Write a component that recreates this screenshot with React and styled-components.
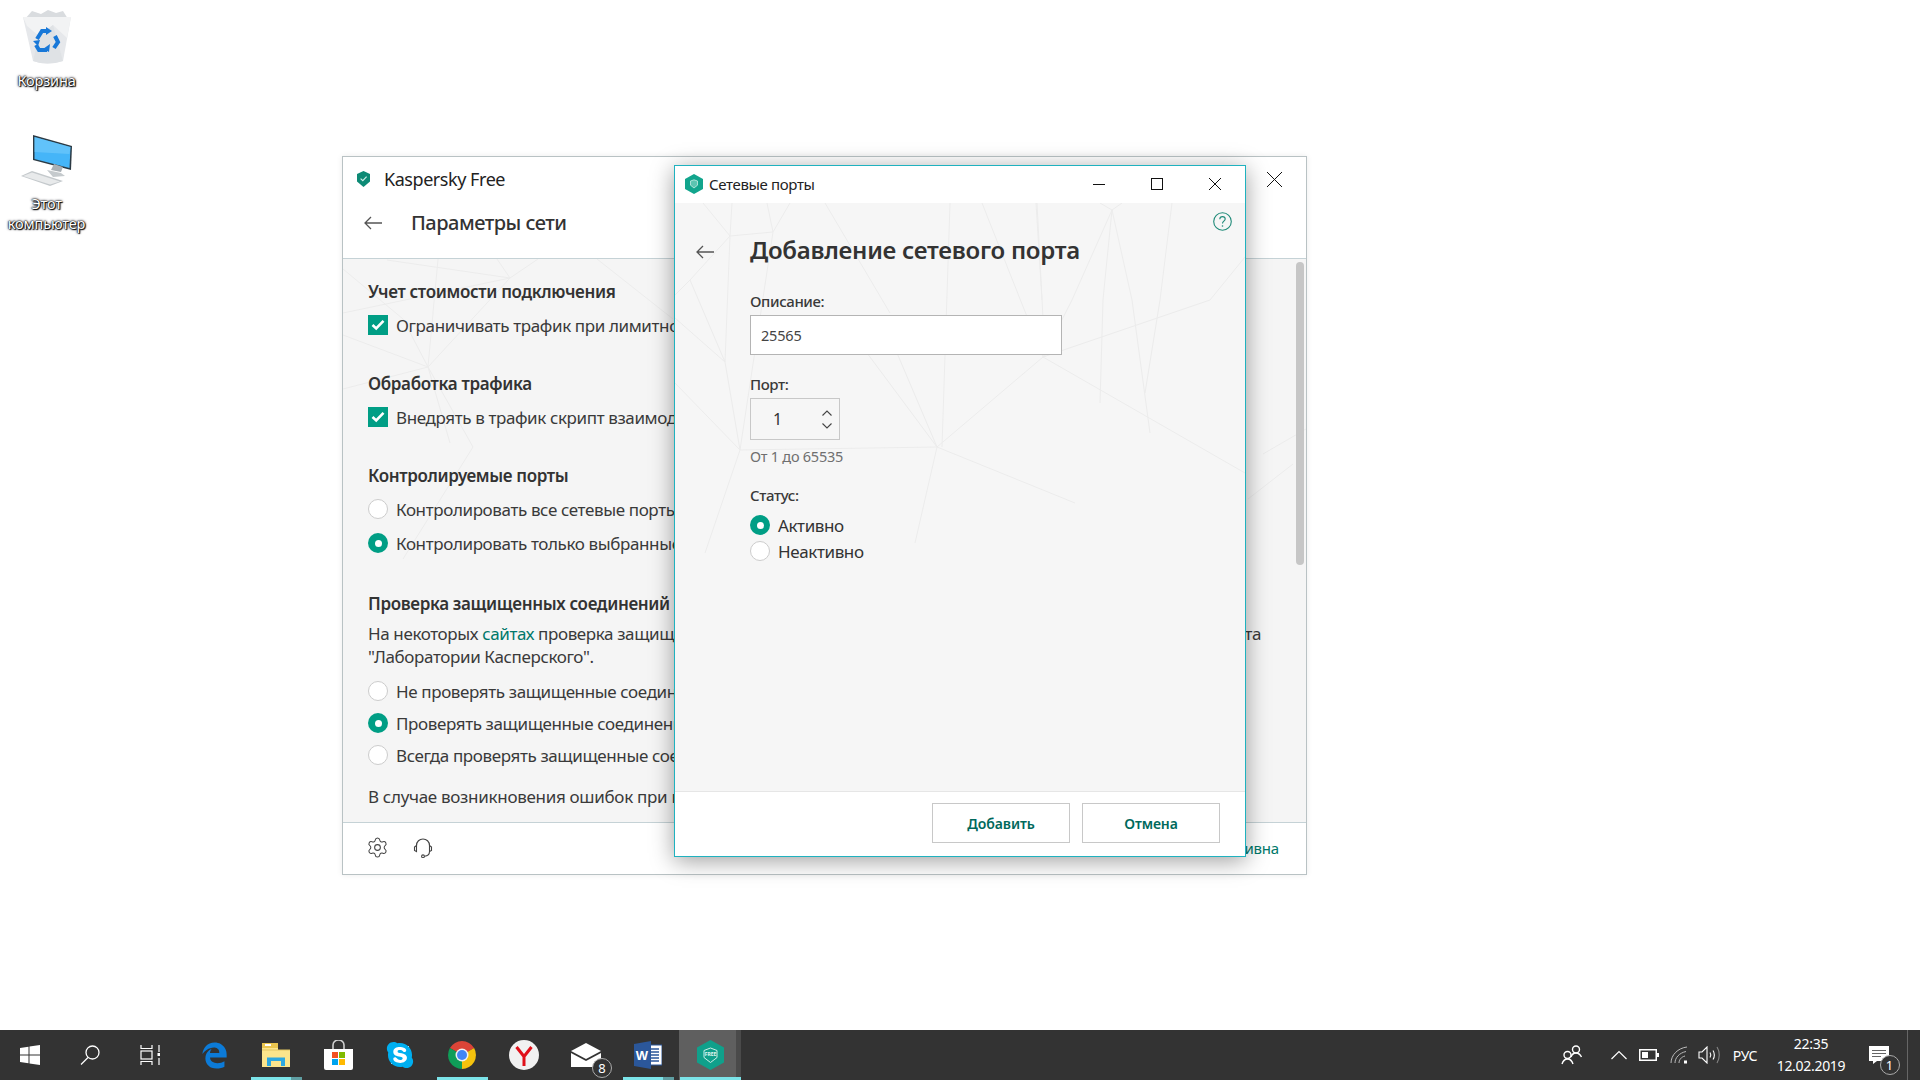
import React from "react";
import styled, { createGlobalStyle } from "styled-components";
import { Settings } from "lucide-react";
import { FaSkype } from "react-icons/fa";
import { FaEdgeLegacy } from "react-icons/fa6";

const FONT = `"Noto Sans", "Open Sans", "Liberation Sans", sans-serif`;

const Global = createGlobalStyle`
  html, body { margin: 0; padding: 0; background: #fff; }
  body { font-family: ${FONT}; overflow: hidden; }
  * { box-sizing: border-box; }
`;

const Screen = styled.div`
  width: 1920px; height: 1080px; display: flex; flex-direction: column; overflow: hidden;
`;
const DesktopArea = styled.div`
  flex: 1; position: relative; background: #fff;
`;
const DesktopIcon = styled.div`
  position: absolute; left: 0; top: ${p => p.$top}px; width: 93px;
  display: flex; flex-direction: column; align-items: center;
`;
const DesktopLabel = styled.div`
  color: #fff; font-size: 14.5px; line-height: 20px; letter-spacing: -0.15px; text-align: center;
  margin-top: ${p => p.$top || 0}px;
  text-shadow: 0 0 2px #000, 1px 1px 1px #000, 0 0 3px #223, 0 0 1px #000;
`;

/* Main window */
const MainWindow = styled.div`
  position: absolute; left: 342px; top: 156px; width: 965px; height: 719px;
  background: #fff; border: 1px solid #b9c2c4; display: flex; flex-direction: column;
  box-shadow: 0 0 6px rgba(0,0,0,.08);
`;
const MainHeader = styled.div`
  height: 102px; flex: none; border-bottom: 1px solid #c5d2d6; display: flex; flex-direction: column;
`;
const MainTitleBar = styled.div`
  height: 44px; display: flex; align-items: center; padding: 0 24px 0 14px;
`;
const MainTitle = styled.div`
  font-size: 18px; color: #222; margin-left: 14px; letter-spacing: -0.45px; flex: 1;
`;
const SubHeader = styled.div`
  height: 43px; display: flex; align-items: center; padding-left: 21px;
`;
const SubTitle = styled.div`
  font-size: 20px; font-weight: 500; color: #333; margin-left: 29px; letter-spacing: -0.5px;
`;
const MainBody = styled.div`
  flex: 1; position: relative; background: #f5f5f5; overflow: hidden; padding: 21px 0 0 25px;
`;
const Pattern = styled.svg`
  position: absolute; left: 0; top: 0; pointer-events: none;
  line { stroke: #ececec; stroke-width: 1; }
`;
const Layer = styled.div`
  position: relative;
`;
const Heading = styled.div`
  font-size: 17px; font-weight: 600; line-height: 24px; color: #333; margin-top: ${p => p.$top || 0}px;
  letter-spacing: -0.35px; white-space: nowrap;
`;
const OptionRow = styled.div`
  display: flex; align-items: center; gap: 8px; height: 24px; margin-top: ${p => p.$top || 0}px;
  font-size: 17px; color: #3a3a3a; letter-spacing: -0.38px; white-space: nowrap;
`;
const CheckBox = styled.span`
  width: 20px; height: 20px; background: #009e85; flex: none; display: flex; align-items: center; justify-content: center;
`;
const Radio = styled.span`
  width: 20px; height: 20px; border-radius: 50%; flex: none; display: flex; align-items: center; justify-content: center;
  background: ${p => (p.$on ? "#009e85" : "#fff")};
  border: ${p => (p.$on ? "none" : "1.5px solid #cccccc")};
  &::after { content: ""; width: 7px; height: 7px; border-radius: 50%; background: ${p => (p.$on ? "#fff" : "transparent")}; }
`;
const Paragraph = styled.div`
  font-size: 17px; line-height: 23px; color: #3a3a3a; margin-top: ${p => p.$top || 0}px; width: 884px; letter-spacing: -0.38px;
`;
const JustLine = styled.span`
  display: block; text-align-last: justify; white-space: nowrap;
`;
const Link = styled.span`
  color: #00786a;
`;
const Plain = styled.div`
  font-size: 17px; line-height: 24px; color: #3a3a3a; margin-top: ${p => p.$top || 0}px; letter-spacing: -0.3px; white-space: nowrap;
`;
const ScrollThumb = styled.div`
  position: absolute; right: 2px; top: 3px; width: 8px; height: 303px; border-radius: 4px; background: #c6c6c6;
`;
const MainFooter = styled.div`
  height: 52px; flex: none; border-top: 1px solid #c5d2d6; display: flex; align-items: center; gap: 24px; padding: 0 27px 2px 23px;
`;
const LicenseText = styled.div`
  margin-left: auto; font-size: 15px; color: #00786a; letter-spacing: -0.2px;
`;

/* Dialog */
const Dialog = styled.div`
  position: absolute; left: 674px; top: 165px; width: 572px; height: 692px;
  background: #fff; border: 1px solid #1fb2bf; display: flex; flex-direction: column;
  box-shadow: 0 4px 22px rgba(0,0,0,.38);
`;
const DialogBar = styled.div`
  height: 37px; flex: none; display: flex; align-items: center; padding: 0 1px 2px 10px;
`;
const DialogBarTitle = styled.div`
  flex: 1; margin-left: 6px; font-size: 15px; color: #222; letter-spacing: -0.35px;
`;
const WinButton = styled.div`
  width: 58px; height: 35px; display: flex; align-items: center; justify-content: center;
`;
const DialogBody = styled.div`
  flex: 1; position: relative; background: #f6f6f6; display: grid; grid-template-columns: 75px 1fr; overflow: hidden;
`;
const BackColumn = styled.div`
  position: relative; padding: 39px 0 0 21px;
`;
const FormColumn = styled.div`
  position: relative; padding-top: 31px; display: flex; flex-direction: column; align-items: flex-start;
`;
const DialogTitle = styled.div`
  font-size: 24px; font-weight: 600; line-height: 32px; color: #333; letter-spacing: -0.26px; white-space: nowrap;
`;
const FieldLabel = styled.div`
  font-size: 15px; font-weight: 500; line-height: 20px; color: #3a3a3a; margin-top: ${p => p.$top}px; letter-spacing: -0.4px;
`;
const TextField = styled.div`
  width: 312px; height: 40px; margin-top: 4px; background: #fff; border: 1px solid #b4b4b4;
  display: flex; align-items: center; padding-left: 10px; font-size: 14.5px; color: #444; letter-spacing: -0.2px;
`;
const Spinner = styled.div`
  width: 90px; height: 42px; margin-top: 4px; border: 1px solid #c8c8c8; display: flex; align-items: center;
  justify-content: space-between; padding: 0 7px 0 22px; font-size: 16px; color: #333;
`;
const SpinArrows = styled.div`
  display: flex; flex-direction: column; gap: 7px;
`;
const Hint = styled.div`
  font-size: 14.5px; line-height: 20px; color: #6f6f6f; margin-top: 6px; letter-spacing: -0.25px;
`;
const StatusRow = styled(OptionRow)`
  color: #333;
`;
const HelpIcon = styled.svg`
  position: absolute; right: 13px; top: 9px;
`;
const DialogFooter = styled.div`
  height: 65px; flex: none; border-top: 1px solid #e6e6e6; display: flex; align-items: center; justify-content: flex-end;
  gap: 12px; padding: 0 25px 2px 0;
`;
const ActionButton = styled.div`
  width: 138px; height: 40px; border: 1px solid #c8c8c8; background: #fff; display: flex; align-items: center; justify-content: center;
  font-size: 14px; font-weight: 600; color: #00695c; letter-spacing: -0.1px;
`;

/* Taskbar */
const Taskbar = styled.div`
  height: 50px; flex: none; background: #333; display: flex; align-items: stretch;
`;
const SystemButton = styled.div`
  width: 60px; display: flex; align-items: center; justify-content: center;
`;
const Gap = styled.div`
  width: ${p => p.$w}px; flex: none;
`;
const TaskButton = styled.div`
  width: 62px; position: relative; display: flex; align-items: center; justify-content: center;
  background: ${p => (p.$active ? "linear-gradient(90deg,#5f5f5f 0 57px,#4a4a4a 57px)" : "transparent")};
  &::after {
    content: ""; position: absolute; bottom: 0; height: 3px;
    left: ${p => (p.$active ? 1 : 6)}px; right: ${p => (p.$active ? 0 : 5)}px;
    display: ${p => (p.$run ? "block" : "none")};
    background: ${p => (p.$stack ? "linear-gradient(90deg,#7be3e8 0 40px,#5f9ea2 40px)" : "#7be3e8")};
  }
`;
const BadgeWrap = styled.div`
  position: relative; display: flex;
`;
const Badge = styled.div`
  position: absolute; right: -11px; bottom: -11px; width: 20px; height: 20px; border-radius: 50%;
  background: #333; border: 1px solid #aaa; color: #fff; font-size: 13px; display: flex; align-items: center; justify-content: center;
`;
const Tray = styled.div`
  margin-left: auto; display: flex; align-items: stretch; color: #fff;
`;
const TrayItem = styled.div`
  width: ${p => p.$w}px; display: flex; align-items: center; justify-content: center;
`;
const LangText = styled.div`
  font-size: 14px; color: #fff; letter-spacing: -0.2px;
`;
const Clock = styled.div`
  width: 88px; display: flex; flex-direction: column; align-items: center; justify-content: center; gap: 2px;
  font-size: 14px; line-height: 20px; color: #fff; letter-spacing: -0.3px;
`;
const ShowDesktop = styled.div`
  width: 13px; border-left: 1px solid #666; margin-left: 5px;
`;

/* Drawings */
const lines = pts => pts.map((l, i) => <line key={i} x1={l[0]} y1={l[1]} x2={l[2]} y2={l[3]} />);
const mainLines = [
  [95,0,85,108],[44,1,167,19],[154,0,167,19],[195,0,167,19],[167,19,85,108],[0,54,167,19],[0,76,85,108],
  [0,10,60,60],[85,108,130,188],[85,108,107,184],[254,0,330,60],[60,60,85,108],[0,130,85,108],[130,188,60,300],
  [950,205,905,240],[963,170,920,195]
];
const dialogLines = [
  [55,33,98,29],[28,0,55,33],[57,0,55,33],[92,0,98,29],[115,0,98,29],[98,29,65,247],[55,33,15,77],[55,33,50,159],
  [15,77,50,159],[0,92,15,77],[0,115,50,159],[50,159,65,247],[0,180,65,247],[65,247,30,350],[150,0,215,110],[275,0,267,244],
  [307,0,368,154],[362,0,370,154],[192,150,262,244],[222,150,262,244],[262,244,368,154],[368,154,570,270],[437,7,397,97],
  [437,7,428,97],[437,7,457,97],[497,0,485,97],[361,0,367,97],[570,54,535,97],[425,0,437,7],[447,0,437,7],[397,97,368,154],
  [428,97,425,200],[457,97,475,230],[485,97,470,190],[535,97,368,154],[262,244,240,340],[262,244,400,300],[65,247,262,244]
];

const BackArrow = () => (
  <svg width="18" height="14" viewBox="0 0 18 14" fill="none" stroke="#555" strokeWidth="1.3"><path d="M18 7H1M7 1 1 7l6 6" /></svg>
);
const Cross = ({ s = 12 }) => (
  <svg width={s} height={s} viewBox="0 0 12 12" stroke="#111" strokeWidth={12 / s} fill="none"><path d="M0 0 12 12M12 0 0 12" /></svg>
);
const Check = () => (
  <svg width="14" height="12" viewBox="0 0 14 12" fill="none" stroke="#fff" strokeWidth="2.6"><path d="M1.5 6 5.2 9.5 12.5 1.8" /></svg>
);
const ShieldSmall = () => (
  <svg width="13" height="16" viewBox="0 0 13 16"><path d="M6.5 0 13 3v7.5L6.5 16 0 10.5V3Z" fill="#0d8a75" /><path d="M3.6 7.6 5.8 9.6 9.6 5.6" stroke="#cfeee8" strokeWidth="1.2" fill="none" /></svg>
);
const HexIcon = ({ w, h }) => (
  <svg width={w} height={h} viewBox="0 0 18 20">
    <path d="M9 0 18 5v10l-9 5-9-5V5Z" fill="#12a58d" />
    <path d="M5.5 7 9 5.8 12.5 7v4.2L9 14 5.5 11.2Z" fill="#5cc4b1" stroke="#d9f3ee" strokeWidth="0.7" />
  </svg>
);
const Headset = () => (
  <svg width="20" height="20" viewBox="0 0 20 20" fill="none" stroke="#444" strokeWidth="1.1">
    <path d="M3.5 7.5C3.5 3.5 6.5 1 10 1s6.5 2.500 6.5 6.5" />
    <path d="M3.5 7.5 1.5 9v3.5l2 1Z" /><path d="M16.5 7.5l2 1.5v3.5l-2 1ZM16.5 13.5c0 2.500-2 4.500-5 4.800" />
    <circle cx="10" cy="18.300" r="1.400" />
  </svg>
);
const RecycleBin = () => (
  <svg width="60" height="56" viewBox="0 0 60 56">
    <path d="M8 11 15 3l9 3 7-4 8 3 7-2 5 8-8 4H14Z" fill="#d9dcdf" />
    <path d="M6 9H54L46 53Q30 58 16 53Z" fill="#e6e8eb" />
    <path d="M6 9H54L50 30 36 17 22 28 10 18Z" fill="#f2f3f4" />
    <path d="M16 53 22 28 36 17 46 53Q30 58 16 53Z" fill="#dfe2e5" />
    <g fill="none" stroke="#1878d8" strokeWidth="4">
      <path d="M20 31l5-8h5" /><path d="M38 28l3 6-4 6" /><path d="M30 42h-8l-3-5" />
    </g>
    <path d="M29 19l6 4-6 4ZM33 36l-1 8-6-3ZM16 33l7-1-2 6Z" fill="#1878d8" />
  </svg>
);
const Computer = () => (
  <svg width="60" height="58" viewBox="0 0 60 58">
    <path d="M16 1 55 12 54 36 16 26Z" fill="#2c3a44" />
    <path d="M17.5 3 53.5 13 52.5 34 17.5 25Z" fill="#45b5f8" />
    <path d="M17.5 3 53.5 13 52.5 20 17.5 18Z" fill="#7dd0fb" opacity=".5" />
    <path d="M37 30 46 33 44 38 34 36Z" fill="#a9b0b5" />
    <path d="M30 36 44 39 48 42 36 43Z" fill="#c5cacd" />
    <path d="M4 42 15 37 46 47 33 52Z" fill="#c4c9cc" />
    <path d="M6 42 15 38.5 43 47.5 33 50.5Z" fill="#e8eaeb" />
  </svg>
);
const WinLogo = () => (
  <svg width="20" height="20" viewBox="0 0 20 20" fill="#fff">
    <path d="M0 3 8.5 1.8V9.5H0ZM9.5 1.6 20 0V9.5H9.5ZM0 10.5H8.5V18.2L0 17ZM9.5 10.5H20V20L9.5 18.4Z" />
  </svg>
);
const SearchIcon = () => (
  <svg width="20" height="20" viewBox="0 0 20 20" fill="none" stroke="#fff" strokeWidth="1.3"><circle cx="12.5" cy="7.5" r="6.5" /><path d="M8 12.5 1 19.5" /></svg>
);
const TaskViewIcon = () => (
  <svg width="20" height="20" viewBox="0 0 20 20" fill="none" stroke="#fff" strokeWidth="1.2">
    <path d="M1 0v3.5h11V0M1 20v-3.5h11V20" /><rect x="1" y="6" width="11" height="8" /><path d="M19 0v7M19 13v7" /><rect x="17.5" y="8" width="3" height="3" fill="#fff" stroke="none" />
  </svg>
);
const Explorer = () => (
  <svg width="28" height="24" viewBox="0 0 28 24">
    <path d="M0 1h10l2 2h4V7H28v17H0Z" fill="#fce58c" />
    <path d="M0 0h16v5H0Z" fill="#eac54f" /><rect x="3" y="1" width="6" height="2" fill="#fff" />
    <path d="M5 23v-8.500h18V23h-4v-5H9v5Z" fill="#2ea8e0" />
    <path d="M0 7H28" stroke="#e3c661" />
  </svg>
);
const StoreIcon = () => (
  <svg width="29" height="30" viewBox="0 0 29 30">
    <path d="M9 9V5a5.500 5 0 0 1 11 0v4" fill="none" stroke="#cfcfcf" strokeWidth="1.6" />
    <path d="M0 9H29V28Q29 30 27 30H2Q0 30 0 28Z" fill="#fff" />
    <rect x="8" y="12" width="6" height="6" fill="#f25022" /><rect x="15" y="12" width="6" height="6" fill="#7fba00" />
    <rect x="8" y="19" width="6" height="6" fill="#00a4ef" /><rect x="15" y="19" width="6" height="6" fill="#ffb900" />
  </svg>
);
const SkypeIcon = styled.div`
  position: relative; width: 28px; height: 28px; display: flex; align-items: center; justify-content: center; color: #00aff0;
  &::before { content: ""; position: absolute; inset: 5px; background: #fff; }
  svg { position: relative; }
`;
const Chrome = () => (
  <svg width="28" height="28" viewBox="0 0 28 28">
    <path d="M14 14 1.900 7A14 14 0 0 1 26.100 7Z" fill="#db4437" />
    <path d="M14 14 26.100 7A14 14 0 0 1 14 28Z" fill="#f4c20d" />
    <path d="M14 14 14 28A14 14 0 0 1 1.900 7Z" fill="#0f9d58" />
    <circle cx="14" cy="14" r="6.500" fill="#f1f1f1" /><circle cx="14" cy="14" r="5" fill="#4285f4" />
  </svg>
);
const Yandex = () => (
  <svg width="30" height="30" viewBox="0 0 30 30">
    <circle cx="15" cy="15" r="15" fill="#f1f1f1" />
    <path d="M7.500 7 15 16.500 22.500 7M15 16.500V26" fill="none" stroke="#e0101a" strokeWidth="3" />
  </svg>
);
const MailIcon = () => (
  <svg width="30" height="24" viewBox="0 0 30 24">
    <path d="M0 8 15 0l15 8-15 8Z" fill="#fff" /><path d="M0 10 15 18 30 10V24H0Z" fill="#fff" />
  </svg>
);
const WordIcon = () => (
  <svg width="28" height="28" viewBox="0 0 28 28">
    <rect x="12" y="4" width="16" height="20" fill="#fff" stroke="#2b579a" />
    <path d="M15 8h10M15 11h10M15 14h10M15 17h10M15 20h10" stroke="#2b579a" strokeWidth="1.4" />
    <path d="M0 3 17 0V28L0 25Z" fill="#2b579a" />
    <text x="8" y="19" textAnchor="middle" fontSize="13" fontWeight="700" fill="#fff" fontFamily="Liberation Sans, sans-serif">W</text>
  </svg>
);
const KasperskyTask = () => (
  <svg width="27" height="30" viewBox="0 0 27 30">
    <path d="M13.500 0 27 7.500v15L13.500 30 0 22.500v-15Z" fill="#10a08b" />
    <path d="M7 10.500 13.500 8l6.500 2.500v7l-6.500 5-6.500-5Z" fill="none" stroke="#cdeee7" strokeWidth="1" />
    <text x="13.500" y="16" textAnchor="middle" fontSize="5" fontWeight="700" fill="#e6f7f3" fontFamily="Noto Sans, sans-serif">FREE</text>
  </svg>
);
const People = () => (
  <svg width="22" height="20" viewBox="0 0 22 20" fill="none" stroke="#fff" strokeWidth="1.4">
    <circle cx="15" cy="4.500" r="3.500" /><path d="M10 12c1-3 3-4 5-4s4 1 5.500 4" />
    <circle cx="6.500" cy="10" r="3.500" /><path d="M1 19c1-3 3-5 5.500-5s4.500 2 5.500 5" />
  </svg>
);
const Chevron = () => (
  <svg width="16" height="10" viewBox="0 0 16 10" fill="none" stroke="#fff" strokeWidth="1.2"><path d="M.5 9 8 1.500 15.500 9" /></svg>
);
const Battery = () => (
  <svg width="20" height="12" viewBox="0 0 20 12">
    <rect x=".75" y=".75" width="16.500" height="10.500" fill="none" stroke="#fff" strokeWidth="1.5" />
    <rect x="3" y="3" width="6" height="6" fill="#fff" /><rect x="18" y="4" width="2" height="4" fill="#fff" />
  </svg>
);
const Wifi = () => (
  <svg width="18" height="18" viewBox="0 0 18 18" fill="none" stroke="#bbb" strokeWidth="1">
    <path d="M1 17C1 9 8 2 17 1M5 17C5 12 9 7 16 5.500M9 17C9 14 11 11 15 10" /><rect x="14" y="14.500" width="3" height="3" fill="#fff" stroke="none" />
  </svg>
);
const Speaker = () => (
  <svg width="22" height="18" viewBox="0 0 22 18" fill="none" stroke="#fff" strokeWidth="1.1">
    <path d="M1 6h3l5-5v16l-5-5H1Z" /><path d="M12 6.500c1 1.500 1 3.500 0 5" /><path d="M15 4.500c1.800 2.500 1.800 6.500 0 9" /><path d="M19 1c3 4.500 3 11.500 0 16" stroke="#888" />
  </svg>
);
const Notify = () => (
  <svg width="20" height="18" viewBox="0 0 20 18">
    <path d="M0 0H20V15H8L4 18V15H0Z" fill="#fff" /><path d="M3 4.500H17M3 7.500H17M3 10.500H12" stroke="#666" strokeWidth="1" />
  </svg>
);

export default function App() {
  return (
    <Screen>
      <Global />
      <DesktopArea>
        <DesktopIcon $top={8}>
          <RecycleBin />
          <DesktopLabel $top={6}>Корзина</DesktopLabel>
        </DesktopIcon>
        <DesktopIcon $top={134}>
          <Computer />
          <DesktopLabel $top={1}>Этот<br />компьютер</DesktopLabel>
        </DesktopIcon>

        <MainWindow>
          <MainHeader>
            <MainTitleBar>
              <ShieldSmall />
              <MainTitle>Kaspersky Free</MainTitle>
              <Cross s={15} />
            </MainTitleBar>
            <SubHeader>
              <BackArrow />
              <SubTitle>Параметры сети</SubTitle>
            </SubHeader>
          </MainHeader>
          <MainBody>
            <Pattern width="963" height="563" viewBox="0 0 963 563">{lines(mainLines)}</Pattern>
            <Layer>
              <Heading>Учет стоимости подключения</Heading>
              <OptionRow $top={9}><CheckBox><Check /></CheckBox>Ограничивать трафик при лимитном</OptionRow>
              <Heading $top={35}>Обработка трафика</Heading>
              <OptionRow $top={9}><CheckBox><Check /></CheckBox>Внедрять в трафик скрипт взаимодействия</OptionRow>
              <Heading $top={35}>Контролируемые порты</Heading>
              <OptionRow $top={9}><Radio />Контролировать все сетевые порты</OptionRow>
              <OptionRow $top={10}><Radio $on />Контролировать только выбранные</OptionRow>
              <Heading $top={37}>Проверка защищенных соединений</Heading>
              <Paragraph $top={6}>
                <JustLine>На некоторых <Link>сайтах</Link> проверка защищенных соединений не выполняется по рекомендации экспертов продукта</JustLine>
                "Лаборатории Касперского".
              </Paragraph>
              <OptionRow $top={11}><Radio />Не проверять защищенные соединения</OptionRow>
              <OptionRow $top={8}><Radio $on />Проверять защищенные соединения</OptionRow>
              <OptionRow $top={8}><Radio />Всегда проверять защищенные соединения</OptionRow>
              <Plain $top={18}>В случае возникновения ошибок при проверке</Plain>
            </Layer>
            <ScrollThumb />
          </MainBody>
          <MainFooter>
            <Settings size={23} strokeWidth={1.1} color="#444" />
            <Headset />
            <LicenseText>Лицензия: активна</LicenseText>
          </MainFooter>
        </MainWindow>

        <Dialog>
          <DialogBar>
            <HexIcon w={18} h={20} />
            <DialogBarTitle>Сетевые порты</DialogBarTitle>
            <WinButton><svg width="12" height="12" viewBox="0 0 12 12" stroke="#111" fill="none"><path d="M0 6.500H12" /></svg></WinButton>
            <WinButton><svg width="12" height="12" viewBox="0 0 12 12" stroke="#111" fill="none"><rect x=".5" y=".5" width="11" height="11" /></svg></WinButton>
            <WinButton><Cross s={12} /></WinButton>
          </DialogBar>
          <DialogBody>
            <Pattern width="570" height="589" viewBox="0 0 570 589">{lines(dialogLines)}</Pattern>
            <BackColumn><BackArrow /></BackColumn>
            <FormColumn>
              <DialogTitle>Добавление сетевого порта</DialogTitle>
              <FieldLabel $top={25}>Описание:</FieldLabel>
              <TextField>25565</TextField>
              <FieldLabel $top={19}>Порт:</FieldLabel>
              <Spinner>
                1
                <SpinArrows>
                  <svg width="10" height="6" viewBox="0 0 10 6" fill="none" stroke="#444" strokeWidth="1.1"><path d="M.5 5.500 5 1l4.500 4.500" /></svg>
                  <svg width="10" height="6" viewBox="0 0 10 6" fill="none" stroke="#444" strokeWidth="1.1"><path d="M.5.500 5 5 9.500.500" /></svg>
                </SpinArrows>
              </Spinner>
              <Hint>От 1 до 65535</Hint>
              <FieldLabel $top={19}>Статус:</FieldLabel>
              <StatusRow $top={8}><Radio $on />Активно</StatusRow>
              <StatusRow $top={2}><Radio />Неактивно</StatusRow>
            </FormColumn>
            <HelpIcon width="19" height="19" viewBox="0 0 19 19" fill="none" stroke="#1f8a78" strokeWidth="1.1">
              <circle cx="9.500" cy="9.500" r="8.800" />
              <path d="M6.800 7.300c0-1.700 1.200-2.700 2.700-2.700s2.700 1 2.700 2.500c0 2-2.700 2.200-2.700 4.300" />
              <circle cx="9.500" cy="14" r=".8" fill="#1f8a78" stroke="none" />
            </HelpIcon>
          </DialogBody>
          <DialogFooter>
            <ActionButton>Добавить</ActionButton>
            <ActionButton>Отмена</ActionButton>
          </DialogFooter>
        </Dialog>
      </DesktopArea>

      <Taskbar>
        <SystemButton><WinLogo /></SystemButton>
        <SystemButton><SearchIcon /></SystemButton>
        <SystemButton><TaskViewIcon /></SystemButton>
        <Gap $w={3} />
        <TaskButton><FaEdgeLegacy size={27} color="#0c7bd8" /></TaskButton>
        <TaskButton $run $stack><Explorer /></TaskButton>
        <TaskButton><StoreIcon /></TaskButton>
        <TaskButton><SkypeIcon><FaSkype size={30} /></SkypeIcon></TaskButton>
        <TaskButton $run><Chrome /></TaskButton>
        <TaskButton><Yandex /></TaskButton>
        <TaskButton><BadgeWrap><MailIcon /><Badge>8</Badge></BadgeWrap></TaskButton>
        <TaskButton $run $stack><WordIcon /></TaskButton>
        <TaskButton $run $active><KasperskyTask /></TaskButton>
        <Tray>
          <TrayItem $w={46}><People /></TrayItem>
          <Gap $w={9} />
          <TrayItem $w={30}><Chevron /></TrayItem>
          <TrayItem $w={30}><Battery /></TrayItem>
          <TrayItem $w={30}><Wifi /></TrayItem>
          <TrayItem $w={29}><Speaker /></TrayItem>
          <TrayItem $w={44}><LangText>РУС</LangText></TrayItem>
          <Clock><span>22:35</span><span>12.02.2019</span></Clock>
          <TrayItem $w={47}>
            <BadgeWrap><Notify /><Badge>1</Badge></BadgeWrap>
          </TrayItem>
          <ShowDesktop />
        </Tray>
      </Taskbar>
    </Screen>
  );
}
